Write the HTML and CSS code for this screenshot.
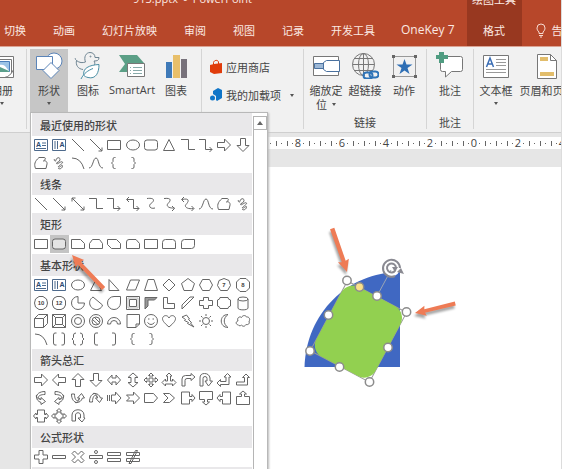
FILE: index.html
```html
<!DOCTYPE html>
<html lang="zh-CN">
<head>
<meta charset="utf-8">
<title>PowerPoint</title>
<link rel="stylesheet" href="styles.css">
</head>
<body>
<div class="app">
  <header class="header">
    <nav class="tabs">
      <a class="tab" href="#">切换</a>
      <a class="tab" href="#">动画</a>
      <a class="tab" href="#">幻灯片放映</a>
      <a class="tab" href="#">审阅</a>
      <a class="tab" href="#">视图</a>
      <a class="tab" href="#">记录</a>
      <a class="tab" href="#">开发工具</a>
      <a class="tab latin" href="#">OneKey 7</a>
      <a class="tab context" href="#"><span class="context-title">绘图工具</span>格式</a>
      <a class="tab tell" href="#">
        <svg width="12" height="16" viewBox="0 0 12 16" fill="none" stroke="#f6d9cf"><path d="M4 11.5V10C2.500 8.500 2 7.500 2 6a4 4 0 0 1 8 0c0 1.500-.5 2.500-2 4v1.500zM4 13.500h4M5 15h2"/></svg>告诉我</a>
    </nav>
    <div class="title">913.pptx &nbsp;-&nbsp; PowerPoint</div>
  </header>

  <div class="ribbon">
    <section class="group album">
      <button class="tool">
        <svg width="28" height="28" viewBox="0 0 28 28" fill="none" stroke="#777"><path fill="#fff" d="M5.500 5.500h20v18h-20z"/><path fill="#fff" stroke="#777" d="M2.500 8.500h21v18h-21z"/><path fill="#9cc3e6" stroke="#4a7ebb" d="M4.500 10.500h17v10h-17z"/><path fill="#fff" stroke="none" d="M5 19q7-8 12-4l4 5H5z"/><path fill="#5b9f8b" stroke="none" d="M5 20l7-4 9 4v1H5z"/><path fill="#fff" d="M16.500 26.500q6-1 9-8v8z"/></svg>
        <span class="name">相册</span><i class="caret"></i>
      </button>
    </section>
    <section class="group insert">
      <div class="anchor">
        <button class="tool pressed shape-tool" aria-expanded="true">
          <svg width="28" height="28" viewBox="0 0 28 28" fill="#fff" stroke="#5b84b8"><circle cx="19" cy="10" r="8"/><path d="M1.500 5.500h16v13h-16z"/><path d="M16 11.500l8 8-8 8-8-8z"/></svg>
          <span class="name">形状</span><i class="caret"></i>
        </button>
        <div class="menu">
          <div class="gallery" id="gallery"></div>
          <div class="scroll"><button class="scroll-up" aria-label="向上"><i></i></button></div>
        </div>
      </div>
      <button class="tool w40">
        <svg width="28" height="28" viewBox="0 0 28 28" fill="none" stroke="#6f8593"><path d="M9 18.500C4 18 1.500 14 2.500 9.500c3 2.500 6 2.500 9 1.500C9.500 6 12 1.500 16 1.500c3 0 5 2 5 5h4c0 3-2 3.500-5 3.500 1 1.500 1 3 .5 4M2.500 9.500C1 8 1 8 1.500 7"/><circle cx="16.500" cy="5.500" r=".5"/><path fill="#fff" stroke="#4b8fa5" d="M10 24.500c-2-7 5-10.500 15-11 0 8-3 15-11 13-2-.5-3-1-4-2zM7 28c3-6 7-8.500 12-10.500"/></svg>
        <span class="name">图标</span>
      </button>
      <button class="tool w48">
        <svg width="28" height="28" viewBox="0 0 28 28"><path fill="#5b9f86" d="M1 4h18l7 8-6 9H1l6-8z"/><path fill="#fff" stroke="#777" d="M9.500 12.500h17v13h-17z"/><path stroke="#8aa" fill="none" d="M12 16.500h1m2 0h9M12 19.500h1m2 0h9M12 22.500h1m2 0h9"/></svg>
        <span class="name latin">SmartArt</span>
      </button>
      <button class="tool w40">
        <svg width="28" height="28" viewBox="0 0 28 28"><path fill="#3f7ab8" d="M4 11h6v16H4z"/><path fill="#e8bf6a" d="M11 4h7v23h-7z"/><path fill="#77717a" d="M19 8h6v19h-6z"/></svg>
        <span class="name">图表</span>
      </button>
    </section>
    <section class="group addins">
      <button class="row">
        <svg width="14" height="16" viewBox="0 0 14 16"><path fill="#e03c0b" d="M1 6l4-1 8-1v10l-8 1-4-2z"/><path fill="none" stroke="#e03c0b" d="M4.500 6V3.500C5 1 9 .5 9.500 3v2"/></svg>应用商店
      </button>
      <button class="row">
        <svg width="14" height="16" viewBox="0 0 14 16"><path fill="#0f75c8" d="M4 4l5-3 4 2v8l-5 3-1-1V9L4 7z"/><circle cx="3.500" cy="11" r="2.500" fill="#0f75c8"/></svg>我的加载项<i class="caret"></i>
      </button>
    </section>
    <section class="group">
      <div class="tools">
        <button class="tool w44">
          <svg width="28" height="28" viewBox="0 0 28 28" fill="none" stroke="#777"><path fill="#fff" d="M1.500 5.500h25v19h-25z"/><path fill="#9db8d6" stroke="#4a719f" d="M2.500 12.500h9v5h-9z"/><path fill="#fff" stroke="#4a719f" d="M11.500 11.500l3-2h13v11h-13l-3-2z"/></svg>
          <span class="name">缩放定<br>位<i class="caret inline"></i></span>
        </button>
        <button class="tool w34">
          <svg width="28" height="28" viewBox="0 0 28 28" fill="none" stroke="#777"><circle cx="12.500" cy="13.500" r="11"/><ellipse cx="12.500" cy="13.500" rx="5" ry="11"/><path d="M12.500 2.500v22M1.500 13.500h22M3.500 7.500h18M3.500 19.500h18"/><path stroke="#f1f1f1" stroke-width="5" d="M14 24h12"/><g stroke="#2f74b8" stroke-width="2"><rect x="12.500" y="21.500" width="9" height="6" rx="3"/><rect x="18.500" y="20.500" width="9" height="6" rx="3"/></g></svg>
          <span class="name">超链接</span>
        </button>
        <button class="tool w44">
          <svg width="28" height="28" viewBox="0 0 28 28"><path fill="none" stroke="#999" d="M3.500 5.500h22v20h-22z"/><path fill="#666" d="M2 4h3v3H2zM24 4h3v3h-3zM2 24h3v3H2zM24 24h3v3h-3z"/><path fill="#2f6fb5" d="M14.500 8l2 5.500h6l-5 3.500 2 6-5-3.500-5 3.500 2-6-5-3.500h6z"/></svg>
          <span class="name">动作</span>
        </button>
      </div>
      <span class="group-name">链接</span>
    </section>
    <section class="group">
      <div class="tools">
        <button class="tool w46">
          <svg width="28" height="28" viewBox="0 0 28 28"><path fill="#fff" stroke="#777" d="M4.500 5.500h20q2 0 2 2v11q0 2-2 2h-9l-6 5.500v-5.500h-3q-2 0-2-2z"/><path fill="#4f9c81" d="M3 1h5v3h4v4H8v4H3V8H0V4h3z"/></svg>
          <span class="name">批注</span>
        </button>
      </div>
      <span class="group-name">批注</span>
    </section>
    <section class="group last">
      <div class="tools">
        <button class="tool w44">
          <svg width="28" height="28" viewBox="0 0 28 28"><path fill="#fff" stroke="#777" d="M1.500 4.500h25v22h-25z"/><path stroke="#999" d="M14 8.500h10M14 11.500h10M14 14.500h10M4 18.500h20M4 21.500h20"/><path fill="none" stroke="#3b6eb5" stroke-width="1.500" d="M4.500 16l3.500-9 3.500 9M6 13h4"/></svg>
          <span class="name">文本框</span><i class="caret"></i>
        </button>
        <button class="tool w58">
          <svg width="28" height="28" viewBox="0 0 28 28"><path fill="#fff" stroke="#777" d="M4.500 3.500h13l6 6v18h-19z"/><path fill="none" stroke="#777" d="M17.500 3.500v6h6"/><path fill="#e2bd6b" d="M7 6h8v4H7zM7 21h14v4H7z"/></svg>
          <span class="name">页眉和页脚</span>
        </button>
      </div>
    </section>
  </div>

  <main class="workspace">
    <div class="ruler" id="ruler"></div>
    <div class="slide">
      <svg class="drawing" width="220" height="180" viewBox="281 215 220 180">
        <path fill="#4068c2" d="M400 272V367H304.500C306 314 347 272 400 272z"/>
        <path stroke="#9aa5b5" d="M377 296l14-26"/>
        <g transform="rotate(28 358.300 331.400)">
          <rect x="325" y="292" width="67" height="79" fill="none" stroke="#9a9a9a"/>
          <rect x="325" y="292" width="67" height="79" rx="13" fill="#92d050"/>
        </g>
        <g fill="#fff" stroke="#8c8c8c" stroke-width="1.500">
          <circle cx="347" cy="280.500" r="4.200"/><circle cx="377" cy="296" r="4.200"/><circle cx="406.500" cy="312" r="4.200"/><circle cx="328.500" cy="315" r="4.200"/><circle cx="388" cy="347.500" r="4.200"/><circle cx="310" cy="351" r="4.200"/><circle cx="339.500" cy="367" r="4.200"/><circle cx="369.500" cy="382" r="4.200"/><circle cx="359.500" cy="287" r="4.200" fill="#fbe08a"/>
        </g>
        <circle cx="391.500" cy="268" r="6.500" fill="none" stroke="#fff" stroke-width="4"/>
        <g fill="none" stroke="#8a8a92" stroke-width="2"><path d="M395 276a8.500 8.500 0 1 1 5-8M395.500 270a4.500 4.500 0 1 1 .5-2"/></g>
        <path fill="#8a8a92" d="M397 272l7 2-3-6zM392 267h6l-3 5z"/>
      </svg>
    </div>
  </main>

  <svg class="marks" width="440" height="100" viewBox="60 220 440 100">
    <defs><path id="arrow" d="M0 0l12-5.500-1 3.700L46-2.500V2L11 2.300l1 3.700z"/></defs>
    <g fill="#ee7b55">
      <use href="#arrow" transform="translate(347 272) rotate(-108.500)"/>
      <use href="#arrow" transform="translate(415 313) rotate(-13) scale(.9)"/>
      <use href="#arrow" transform="translate(72 255) rotate(47)"/>
    </g>
  </svg>
</div>
<script src="app.js"></script>
</body>
</html>
```
FILE: styles.css
```css
* { box-sizing: border-box; }

body {
  margin: 0;
  font: 11px/14px "Noto Sans CJK SC", sans-serif;
  color: #444;
}

button {
  font: inherit;
  color: inherit;
  border: 0;
  padding: 0;
  background: none;
}

svg { display: block; flex: none; }

.latin, .title { font-family: "Open Sans", "Noto Sans", sans-serif; }

.app {
  position: relative;
  display: flex;
  flex-direction: column;
  height: 100vh;
  overflow: hidden;
  background: #e6e6e6;
  border-right: 1px solid #dcdcdc;
}

/* Title and tabs */
.header {
  display: grid;
  flex: none;
  height: 46px;
  overflow: hidden;
  background: #b7472a;
  color: #fbe9e3;
}

.tabs, .title { grid-area: 1 / 1; }

.title {
  align-self: start;
  justify-self: start;
  margin: -8px 0 0 133px;
}

.tabs { display: flex; margin-left: -9px; }

.tab {
  display: flex;
  flex: none;
  align-items: center;
  height: 46px;
  padding: 14px 14px 0 13px;
  color: inherit;
  text-decoration: none;
  white-space: nowrap;
}

.tab.latin { padding: 14px 12px 0; font-size: 12px; }

.tab.context {
  flex-direction: column;
  justify-content: space-between;
  width: 55px;
  padding: 0 5px 9px;
  background: #983820;
}

.context-title { margin-top: -8px; }

.tab.tell { gap: 5px; }

/* Ribbon */
.ribbon {
  display: flex;
  flex: none;
  height: 87px;
  padding-top: 2px;
  background: #f1f1f1;
  border-top: 1px solid #dba394;
  border-bottom: 1px solid #cfcfcf;
}

.group {
  position: relative;
  display: flex;
  flex: none;
  flex-direction: column;
  height: 80px;
  border-right: 1px solid #d5d5d5;
}

.group.last { border: 0; }
.group.album { width: 27px; }
.group.insert { flex-direction: row; width: 175px; padding-left: 3px; }
.group.addins { width: 102px; padding: 10px 0 0 7px; gap: 12px; }

.album .tool { width: 38px; margin-left: -17px; }

.tools { display: flex; flex: 1; }

.group-name { text-align: center; line-height: 14px; }

.tool {
  display: flex;
  flex-direction: column;
  align-items: center;
  height: 63px;
  padding-top: 2px;
  white-space: nowrap;
}

.tool.pressed { background: #c6c6c6; }
.shape-tool { width: 38px; }
.w34 { width: 34px; }
.w40 { width: 40px; }
.w44 { width: 44px; }
.w46 { width: 46px; }
.w48 { width: 48px; }
.w58 { width: 58px; }

.name { margin-top: 4px; }

.caret {
  width: 0;
  height: 0;
  margin-top: 5px;
  border: 2px solid transparent;
  border-top: 3px solid #555;
  border-bottom: 0;
}

.caret.inline { display: inline-block; margin: 0 0 3px 5px; }

.row {
  display: flex;
  align-items: center;
  gap: 3px;
  height: 16px;
  white-space: nowrap;
}

.row .caret { margin: 0 0 0 6px; }

/* Shape menu */
.anchor { position: relative; height: 63px; }

.menu {
  position: absolute;
  z-index: 2;
  top: 100%;
  left: 0;
  display: flex;
  width: 238px;
  padding-left: 1px;
  background: #fff;
  border: 1px solid #b8b8b8;
  box-shadow: 1px 1px 2px #bbb;
}

.gallery { width: 220px; }

.heading {
  margin: 0;
  padding: 4px 8px;
  height: 22px;
  background: #e9e8ea;
  font-size: 11px;
  font-weight: 500;
  line-height: 14px;
}

.heading:first-child { height: 23px; padding-top: 5px; }

.shapes {
  display: grid;
  grid-template-columns: repeat(12, 1fr);
  grid-auto-rows: 18px;
}

.shapes.loose { padding-bottom: 1px; }

.shape { display: grid; place-items: center; }
.shape.selected { background: #c4c4c4; }
.shape.selected svg { fill: #e4e4e4; }

.shape svg {
  fill: none;
  stroke: #666;
}

.shape text {
  fill: #444;
  stroke: none;
  font: bold 6px "Liberation Sans", sans-serif;
  text-anchor: middle;
}

.shape text.letter { fill: #2c4a72; font-size: 7px; }

.scroll {
  flex: 1;
  margin: 3px 0 0 1px;
  border-left: 1px solid #b5b5b5;
}

.scroll-up {
  display: grid;
  place-items: center;
  width: 100%;
  height: 14px;
  border: 1px solid #b5b5b5;
  border-left: 0;
}

.scroll-up i {
  border: 3px solid transparent;
  border-top: 0;
  border-bottom: 4px solid #666;
}

/* Ruler and slide */
.workspace {
  display: flex;
  flex: 1;
  flex-direction: column;
  min-height: 0;
  padding-top: 4px;
}

.ruler {
  display: flex;
  flex: none;
  height: 12px;
  margin-left: 249px;
  overflow: hidden;
  background: #fff;
  line-height: 12px;
}

.unit { display: flex; flex: none; width: 44px; }
.unit span { width: 10px; text-align: center; font-family: "Open Sans", sans-serif; }

.slide {
  flex: 1;
  margin: 18px 0 0 260px;
  padding: 48px 0 0 21px;
  background: #fff;
  overflow: hidden;
}

.marks {
  position: absolute;
  z-index: 3;
  top: 220px;
  left: 60px;
  pointer-events: none;
  filter: drop-shadow(-1px 3px 1px rgba(0, 0, 0, .35));
}
```
FILE: app.js
```js
// Outlines on an 18 x 18 grid.
const art = {
  textH: '<path stroke="#4d6a8c" d="M2.500 3.500h13v11h-13zM10 7h4M10 9.500h4M4 12.500h10"/><text class="letter" x="6.500" y="11">A</text>',
  textV: '<path stroke="#4d6a8c" d="M2.500 3.500h13v11h-13zM5 5v8M7.500 5v8"/><text class="letter" x="12" y="11">A</text>',
  line: '<path d="M3 3l12 12"/>',
  arrow: '<path d="M3 3l12 12M15 11.500V15h-3.500"/>',
  arrow2: '<path d="M3 3l12 12M15 11.500V15h-3.500M3 6.500V3h3.500"/>',
  rect: '<path d="M2.500 4.500h13v9h-13z"/>',
  oval: '<ellipse cx="9" cy="9" rx="6.500" ry="5"/>',
  round: '<rect x="2.500" y="4" width="13" height="10" rx="2.500"/>',
  tri: '<path d="M9 3.500l5.500 11h-11z"/>',
  rtri: '<path d="M4 3.500l10 11H4z"/>',
  elbow: '<path d="M2 3.500h7.500v10H16"/>',
  elbowA: '<path d="M2 3.500h6.500v10H15M12.500 11l2.500 2.500-2.500 2.500"/>',
  elbowAA: '<path d="M3 4.500h6.500v9H15M12.500 11l2.500 2.500-2.500 2.500M5 2L2.500 4.500 5 7"/>',
  curve: '<path d="M5 3.500c9-1 7 3 4 5s-1 6 4 4.500"/>',
  curveA: '<path d="M4 3.500c9-1 6 3 4 5s0 5 6.500 4.500M12 11l2.500 2.500L12 16"/>',
  curveAA: '<path d="M3 4.500c9-2 6 3 4 5s1 5 7.500 4M12.500 11l2.500 2.500-2.500 2.500M5 2L2.500 4.500 5 7"/>',
  right: '<path d="M2.500 6.500h7V3l6 6-6 6v-3.500h-7z"/>',
  left: '<path d="M15.500 6.500h-7V3l-6 6 6 6v-3.500h7z"/>',
  up: '<path d="M6.500 15.500v-7H3l6-6 6 6h-3.500v7z"/>',
  down: '<path d="M6.500 2.500v7H3l6 6 6-6h-3.500v-7z"/>',
  free: '<path d="M7 3.500h5.500c2 .5 0 3-1 3.500 2-1 4 1 3.500 3l-1 4.500H3.500c-1.500-4-1-7 3.500-11z"/>',
  scribble: '<path d="M6 6.500c0-3 4-4 4-1S6 8 6.500 9.500s5-3 6-1.500-5 4-4 5 4-3 4-1-3 4-4.500 2M6 7c-2 0-2-1-1.500-2"/>',
  arc: '<path d="M3 4q9 0 12 11"/>',
  wave: '<path d="M2 14c4 0 4-10 7-10s2 10 7 10"/>',
  lbrace: '<path d="M10.500 3.500H9.500Q8 3.500 8 5v2.500L6.500 9 8 10.500V13q0 1.500 1.500 1.500h1"/>',
  rbrace: '<path d="M7.500 3.500h1Q10 3.500 10 5v2.500L11.500 9 10 10.500V13q0 1.500-1.500 1.500h-1"/>',
  snip1: '<path d="M2.500 4.500h9l4 4v5h-13z"/>',
  snip2: '<path d="M2.500 8.500l3-4h7l3 4v5h-13z"/>',
  snipD: '<path d="M2.500 4.500h9l4 4v5h-9l-4-4z"/>',
  snipR: '<path d="M2.500 7q0-2.500 2.500-2.500h7l3.500 4v5h-13z"/>',
  round1: '<path d="M2.500 4.500h10q3 0 3 3v6h-13z"/>',
  round2: '<path d="M2.500 7.500q0-3 3-3h7q3 0 3 3v6h-13z"/>',
  roundD: '<path d="M2.500 7.500q0-3 3-3h10v6q0 3-3 3h-10z"/>',
  para: '<path d="M6.500 4h9l-4 10h-9z"/>',
  trap: '<path d="M6 3.500h6l3.500 11h-13z"/>',
  diamond: '<path d="M9 3l6 6-6 6-6-6z"/>',
  penta: '<path d="M9 2.500l6.500 5-2.500 7H5l-2.500-7z"/>',
  hexa: '<path d="M5.500 3.500h7L15.500 9l-3 5.500h-7L2.500 9z"/>',
  n7: '<path d="M9 2.500l5 2 1.500 5-3 5h-7l-3-5 1.500-5z"/><text x="9" y="11">7</text>',
  n8: '<path d="M6 2.500h6L15.500 6v6L12 15.500H6L2.500 12V6z"/><text x="9" y="11">8</text>',
  n10: '<path d="M7 2.500h4l3.500 2.500 1 4-1 4-3.500 2.500H7L3.500 13l-1-4 1-4z"/><text x="9" y="11">10</text>',
  n12: '<path d="M7 2.500h4L14 4l1.500 3v4L14 14l-3 1.500H7L4 14l-1.500-3V7L4 4z"/><text x="9" y="11">12</text>',
  pie: '<path d="M9 2.500a6.500 6.500 0 1 0 6.500 6.500H9z"/>',
  chord: '<path d="M6 3C3 5 2 8 3 11c1.500 4 6 5.500 9 4 1.500-.5 3-2 3.500-4z"/>',
  tear: '<path d="M9 2.500h6.500V9A6.500 6.500 0 1 1 9 2.500z"/>',
  frame: '<path d="M2.500 2.500h13v13h-13zM5.500 5.500h7v7h-7z"/><path stroke="#bbb" d="M4 4h10v10H4z"/>',
  half: '<path d="M3 3.500h12l-2.500 2.500H6v6l-3 3z" fill="#999"/>',
  lshape: '<path d="M3.500 3.500h4v6h7v5h-11z"/>',
  stripe: '<path d="M3 15v-4l8-8h4z"/>',
  cross: '<path d="M6.500 3.500h5v3h4v5h-4v3h-5v-3h-4v-5h4z"/>',
  plaque: '<path d="M5 3.500h8q0 2 2.500 2.500v6q-2.500.5-2.500 2.500H5q0-2-2.500-2.500V6Q5 5.500 5 3.500z"/>',
  can: '<path d="M4 5v9c0 2.500 10 2.500 10 0V5"/><ellipse cx="9" cy="5" rx="5" ry="2"/>',
  cube: '<path d="M2.500 6.500h9v9h-9zM2.500 6.500l4-4h9v9l-4 4M11.500 6.500l4-4"/>',
  bevel: '<path d="M2.500 2.500h13v13h-13zM5.500 5.500h7v7h-7zM2.500 2.500l3 3M15.500 2.500l-3 3M2.500 15.500l3-3M15.500 15.500l-3-3"/>',
  donut: '<circle cx="9" cy="9" r="6.500"/><circle cx="9" cy="9" r="3.500"/>',
  no: '<circle cx="9" cy="9" r="6.500"/><circle cx="9" cy="9" r="4"/><path d="M5.500 7.500l5.500 5M7.500 5.500l5 5"/>',
  block: '<path d="M2.500 12a6.500 6.500 0 0 1 13 0h-3a3.500 3.500 0 0 0-7 0z"/>',
  fold: '<path d="M3 2.500h12.500V12L12 15.500H3zM12 15.500V12h3.500"/>',
  smile: '<circle cx="9" cy="9" r="6.500"/><path d="M5.500 10.500q3.500 4 7 0M6 7h1.500M10.500 7H12"/>',
  heart: '<path d="M9 15C3 10 2.500 8 2.500 6.500 3 3 7.500 2.500 9 6c1.500-3.500 6-3 6.500.5C15.500 8 15 10 9 15z"/>',
  bolt: '<path d="M3 5l4.500-2 3 4-1 .5 3 3-1 .5 3.500 4-6.500-3.500 1-1-4-2 1-1z"/>',
  sun: '<circle cx="9" cy="9" r="3.500"/><path d="M9 2v2M9 14v2M2 9h2M14 9h2M4 4l1.500 1.500M12.500 12.500L14 14M4 14l1.500-1.500M12.500 5.500L14 4"/>',
  moon: '<path d="M13 2.500c-9 0-9 13 0 13-5-3.500-5-9.500 0-13z"/>',
  cloud: '<path d="M4.500 13c-3-.5-3-3.500-.5-4C2.500 5.500 6 4 7.500 5.500 9 2.500 12 3.500 12.500 5c3-.5 4 3 2.500 4 1 3-1 4-3 3.500-1.500 2.500-3.500 2-4.500.5-1 1-2.500 1-3 0z"/>',
  brackets: '<path d="M6.500 3H5Q3.500 3 3.500 5v8q0 2 1.500 2h1.500M11.500 3H13q1.500 0 1.500 2v8q0 2-1.500 2h-1.500"/>',
  braces: '<path d="M7 3Q4.500 3 4.500 5v2.500L3 9l1.500 1.500V13q0 2 2.500 2M11 3q2.500 0 2.500 2v2.500L15 9l-1.500 1.500V13q0 2-2.500 2"/>',
  lbrack: '<path d="M11 3H9Q7.500 3 7.500 5v8q0 2 1.500 2h2"/>',
  rbrack: '<path d="M7 3h2q1.500 0 1.500 2v8q0 2-1.500 2H7"/>',
  leftright: '<path d="M2.500 9l4.500-5v3h4V4l4.500 5-4.500 5v-3H7v3z"/>',
  updown: '<path d="M9 2l5 4.500h-3v5h3L9 16l-5-4.500h3v-5H4z"/>',
  quad: '<path d="M9 2l2.500 2.500H10V8h3.500V6.500L16 9l-2.500 2.500V10H10v3.500h1.500L9 16l-2.500-2.500H8V10H4.500v1.500L2 9l2.500-2.500V8H8V4.500H6.500z"/>',
  tri3: '<path d="M9 2l3 3h-1.500v5h2V8l3.500 3.500-3.500 3.500v-2h-7v2L2 11.500 5.500 8v2h2V5H6z"/>',
  bent: '<path d="M3 15V8q0-3.500 3.500-3.500H12V2.500L16 6l-4 3.500V7.500H8Q6 7.500 6 9.500V15z"/>',
  uturn: '<path d="M3 15V7q0-4.500 4.500-4.500T13 7v3h2.500L11.500 15 8 10h2V7.500q0-2-2-2t-2 2V15z"/>',
  leftup: '<path d="M2 12l3.500-3.500v2H11V6H9l3.500-3.500L16 6h-2v7.500H5.500v2z"/>',
  bentup: '<path d="M2.500 11h8V6.500h-2L12 3l3.500 3.500h-2V14h-11z"/>',
  curvR: '<path d="M13 2.500C3 2.500 2 11 9 13.500v2l4.500-3L9 8.500v2C4.500 9 6 5.500 13 5.500zM4.500 6C3.500 9 7 10 9 10.500"/>',
  curvL: '<path d="M5 2.500c10 0 11 8.500 4 11v2l-4.500-3L9 8.500v2c4.500-1.500 3-5-4-5zM13.500 6c1 3-2.500 4-4.500 4.500"/>',
  curvU: '<path d="M2.500 5c0 10 8.500 11 11 4h2l-3-4.500L8.500 9h2C9 13.500 5.500 12 5.500 5zM6 13.500c3 1 4-2.500 4.500-4.500"/>',
  curvD: '<path d="M2.500 13c0-10 8.500-11 11-4h2l-3 4.500L8.500 9h2C9 4.500 5.500 6 5.500 13zM6 4.500c3-1 4 2.500 4.500 4.500"/>',
  striped: '<path d="M2.500 6v6M4.500 6v6M6.500 6h4V3l5.500 6-5.500 6v-3h-4z"/>',
  notched: '<path d="M2.500 6h7V3l6 6-6 6v-3h-7l3-3z"/>',
  home: '<path d="M2.500 4.500h9L15.500 9l-4 4.500h-9z"/>',
  chevron: '<path d="M3.500 4.500h6L14.500 9l-5 4.500h-6L8 9z"/>',
  callR: '<path d="M2.500 3h8v4.500H13V5.500L16 9l-3 3.500v-2h-2.500V15h-8z"/>',
  callD: '<path d="M2.500 2.500h13v8h-5V13h2L9 16l-3.500-3h2v-2.500h-5z"/>',
  callL: '<path d="M15.500 3h-8v4.500H5V5.500L2 9l3 3.500v-2h2.500V15h8z"/>',
  callU: '<path d="M2.500 15.500h13v-8h-5V5h2L9 2 5.500 5h2v2.500h-5z"/>',
  callLR: '<path d="M5.500 3h7v4.500H14V6l2.500 3-2.500 3v-1.500h-1.500V15h-7v-4.500H4V12L1.500 9 4 6v1.500h1.500z"/>',
  callQ: '<path d="M9 1.500l2.500 2.500H10v2h2v2h2V6.500L16.500 9 14 11.500V10h-2v2h-2v2h1.500L9 16.500 6.500 14H8v-2H6v-2H4v1.500L1.500 9 4 6.500V8h2V6h2V4H6.500z"/>',
  circ: '<path d="M3 14V8c0-7 12-7 12 0v3h1l-3 4-4-4h2.500V8c0-3-5-3-5 0v6z"/>',
  plus: '<path d="M7 2.500h4V7h4.500v4H11v4.500H7V11H2.500V7H7z"/>',
  minus: '<path d="M2.500 7.500h13v3h-13z"/>',
  times: '<path d="M5.500 3L9 6.500 12.500 3 15 5.500 11.500 9l3.500 3.500-2.500 2.500L9 11.500 5.500 15 3 12.500 6.500 9 3 5.500z"/>',
  divide: '<path d="M2.500 7.500h13v3h-13z"/><circle cx="9" cy="4" r="1.500"/><circle cx="9" cy="14" r="1.500"/>',
  equal: '<path d="M2.500 4.500h13v3h-13zM2.500 10.500h13v3h-13z"/>',
  notequal: '<path d="M2.500 4.500h13v3h-13zM2.500 10.500h13v3h-13zM5 15.500L11.500 2.500h2L7 15.500z"/>'
};

const sections = [
  ['最近使用的形状', 'textH textV line arrow rect oval round tri elbow elbowA right down free scribble arc wave lbrace rbrace', true],
  ['线条', 'line arrow arrow2 elbow elbowA elbowAA curve curveA curveAA wave free scribble', false],
  ['矩形', 'rect round* snip1 snip2 snipD snipR rect round2 roundD', true],
  ['基本形状', 'textH textV oval tri rtri para trap diamond penta hexa n7 n8 n10 n12 pie chord tear frame half lshape stripe cross plaque can cube bevel donut no block fold smile heart bolt sun moon cloud arc brackets braces lbrack rbrack lbrace rbrace', true],
  ['箭头总汇', 'right left up down leftright updown quad tri3 bent uturn leftup bentup curvR curvL curvU curvD striped notched home chevron callR callD callL callU callLR callQ circ', true],
  ['公式形状', 'plus minus times divide equal notequal', true],
  ['', '', false]
];

const shapeButton = (entry) => {
  const name = entry.replace('*', '');
  const selected = entry.endsWith('*') ? ' selected' : '';
  return `<button class="shape${selected}" aria-label="${name}"><svg width="18" height="18" viewBox="0 0 18 18">${art[name]}</svg></button>`;
};

document.getElementById('gallery').innerHTML = sections.map(([title, names, loose]) =>
  `<h3 class="heading">${title}</h3><div class="shapes${loose ? ' loose' : ''}">` +
  names.split(' ').filter(Boolean).map(shapeButton).join('') + '</div>'
).join('');

// Seven marks between labels: dots alternate with short ticks.
const marks = '<svg width="34" height="12" stroke="#666"><path d="M0 6.500h1M11 6.500h1M22 6.500h1M33 6.500h1M6.500 4v5M17.500 4v5M28.500 4v5"/></svg>';
document.getElementById('ruler').innerHTML = [10, 8, 6, 4, 2, 0, 2, 4]
  .map((n) => `<div class="unit"><span>${n}</span>${marks}</div>`).join('');
```
